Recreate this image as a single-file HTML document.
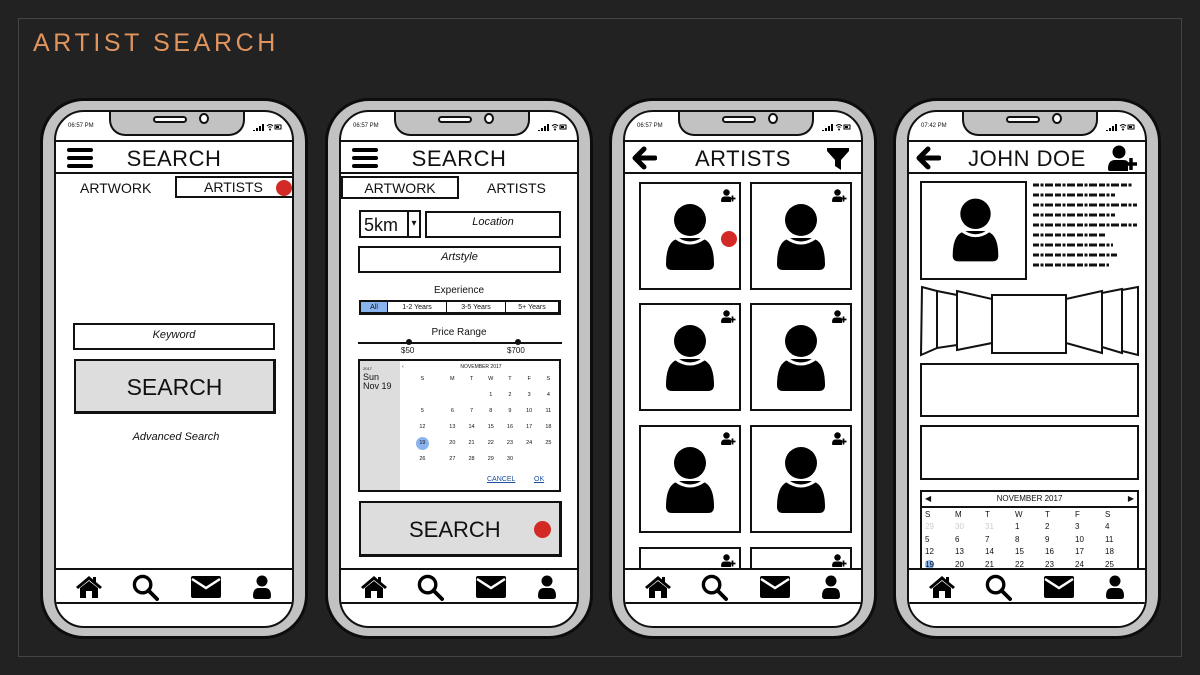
<!DOCTYPE html>
<html><head><meta charset="utf-8">
<style>
*{margin:0;padding:0;box-sizing:border-box}
body{width:1200px;height:675px;background:#222;position:relative;overflow:hidden;font-family:"Liberation Sans",sans-serif;color:#111}
.frame{position:absolute;left:18px;top:18px;width:1164px;height:639px;border:1px solid #444}
.title{position:absolute;left:33px;top:29px;font-size:25px;letter-spacing:3.6px;color:#e0945e}
.ph{position:absolute;top:98px;width:268px;height:541px;background:#c2c2c2;border:3px solid #0d0d0d;border-radius:44px}
.scr{position:absolute;left:11px;top:9px;width:240px;height:518px;background:#fff;border:2px solid #111;border-radius:30px;overflow:hidden}
.notch{position:absolute;left:53px;top:-2px;width:136px;height:26px;background:#c2c2c2;border:2px solid #111;border-top:none;border-radius:0 0 16px 16px}
.spk{position:absolute;left:42px;top:6px;width:34px;height:7px;border:2px solid #111;border-radius:4px;background:#fff}
.cam{position:absolute;left:88px;top:3px;width:10px;height:11px;border:2px solid #111;border-radius:50%;background:#fff}
.time{position:absolute;left:12px;top:11px;font-size:6px}
.sig{position:absolute;left:196px;top:11px;width:30px;height:8px}
.hdr{position:absolute;left:0;top:28px;width:236px;height:34px;border-top:2px solid #111;border-bottom:2px solid #111}
.hdr .t{position:absolute;left:0;right:0;top:4px;text-align:center;font-size:22px;letter-spacing:0.5px}
.nav{position:absolute;left:0;top:456px;width:236px;height:36px;border-top:2px solid #111;border-bottom:2px solid #111}
.a{position:absolute}
.box{position:absolute;border:2px solid #111;background:#fff}
.it{font-style:italic;font-size:11px;text-align:center}
.red{position:absolute;width:16px;height:16px;border-radius:50%;background:#d42a26}
.cal td{font-size:5.5px;text-align:center;height:16px}
.cal4 td{font-size:8px;text-align:left;height:12.5px;padding-left:3px}
</style></head><body>
<svg width="0" height="0" style="position:absolute">
<defs>
<symbol id="person" viewBox="0 0 60 70"><circle cx="30" cy="18" r="16"/><path d="M6 62 Q6 36 22 36 L38 36 Q54 36 54 62 Q54 68 48 68 L12 68 Q6 68 6 62Z"/><path d="M16 36 Q30 46 44 36" stroke="#fff" stroke-width="3" fill="none"/></symbol>
<symbol id="home" viewBox="0 0 28 24"><path d="M14 1 L1 12 L3 14 L14 5 L25 14 L27 12 L21 7 L21 2 L18 2 L18 4.5Z"/><path d="M5 13 L14 6 L23 13 L23 23 L17 23 L17 16 L11 16 L11 23 L5 23Z"/></symbol>
<symbol id="mag" viewBox="0 0 28 28"><circle cx="11" cy="11" r="8.5" fill="none" stroke="#000" stroke-width="3.5"/><path d="M17 17 L26 26" stroke="#000" stroke-width="4" stroke-linecap="round"/></symbol>
<symbol id="mail" viewBox="0 0 30 22"><rect x="0" y="0" width="30" height="22" rx="2"/><path d="M1 3 L15 12 L29 3" stroke="#fff" stroke-width="2.5" fill="none"/></symbol>
<symbol id="usr" viewBox="0 0 20 24"><circle cx="10" cy="6" r="5.5"/><path d="M1 21 Q1 13 7 13 L13 13 Q19 13 19 21 Q19 24 16 24 L4 24 Q1 24 1 21Z"/></symbol>
<symbol id="addu" viewBox="0 0 30 26"><circle cx="11" cy="7" r="6.5"/><path d="M0 24 Q0 15 7 15 L15 15 Q19 15 20 17 L20 26 L2 26 Q0 26 0 24Z"/><path d="M17 19 L29 19 M23 13 L23 25" stroke="#000" stroke-width="3.5"/></symbol>
<symbol id="sig" viewBox="0 0 30 8"><path d="M1 7h2v1H1zM4 5h2v3H4zM7 3h2v5H7zM10 1h2v7h-2z"/><path d="M15 3 Q18 0 21 3 M16.5 4.5 Q18 3 19.5 4.5" stroke="#000" fill="none" stroke-width="1"/><circle cx="18" cy="6.5" r="1"/><rect x="23" y="2" width="6" height="4" fill="none" stroke="#000" stroke-width="1"/><rect x="24" y="3" width="3" height="2"/></symbol>
</defs></svg>

<div class="frame"></div>
<div class="title">ARTIST SEARCH</div>

<!-- Phone 1 -->
<div class="ph" style="left:40px">
 <div class="scr">
  <div class="notch"><div class="spk"></div><div class="cam"></div></div>
  <div class="time">06:57 PM</div><svg class="sig"><use href="#sig" width="30" height="8"/></svg>
  <div class="hdr"><svg class="a" style="left:11px;top:5px" width="26" height="22"><rect y="1" width="26" height="4" rx="2"/><rect y="9" width="26" height="4" rx="2"/><rect y="17" width="26" height="4" rx="2"/></svg><div class="t">SEARCH</div></div>
  <div class="a" style="left:24px;top:68px;font-size:14px">ARTWORK</div>
  <div class="box" style="left:119px;top:64px;width:119px;height:22px;font-size:14px;padding:1px 0 0 27px">ARTISTS</div>
  <div class="red" style="left:220px;top:68px"></div>
  <div class="box it" style="left:17px;top:211px;width:202px;height:27px;padding-top:4px">Keyword</div>
  <div class="box" style="left:18px;top:247px;width:202px;height:55px;background:#ddd;font-size:23px;text-align:center;padding-top:13px;border-width:2px 3px 3px 2px">SEARCH</div>
  <div class="a it" style="left:0;width:240px;top:319px">Advanced Search</div>
  <div class="nav"><svg class="a" style="left:19px;top:5px" width="28" height="24"><use href="#home" width="28" height="24"/></svg><svg class="a" style="left:76px;top:4px" width="27" height="27"><use href="#mag" width="27" height="27"/></svg><svg class="a" style="left:135px;top:6px" width="30" height="22"><use href="#mail" width="30" height="22"/></svg><svg class="a" style="left:196px;top:5px" width="20" height="24"><use href="#usr" width="20" height="24"/></svg></div>
 </div>
</div>

<!-- Phone 2 -->
<div class="ph" style="left:325px">
 <div class="scr">
  <div class="notch"><div class="spk"></div><div class="cam"></div></div>
  <div class="time">06:57 PM</div><svg class="sig"><use href="#sig" width="30" height="8"/></svg>
  <div class="hdr"><svg class="a" style="left:11px;top:5px" width="26" height="22"><rect y="1" width="26" height="4" rx="2"/><rect y="9" width="26" height="4" rx="2"/><rect y="17" width="26" height="4" rx="2"/></svg><div class="t">SEARCH</div></div>
  <div class="box" style="left:0;top:64px;width:118px;height:23px;font-size:14px;text-align:center;padding-top:2px">ARTWORK</div>
  <div class="a" style="left:146px;top:68px;font-size:14px">ARTISTS</div>
  <div class="box" style="left:18px;top:98px;width:50px;height:28px;font-size:18px;padding:3px 0 0 3px">5km</div>
  <div class="box" style="left:66px;top:98px;width:14px;height:28px;font-size:10px;text-align:center;padding-top:6px">▾</div>
  <div class="box it" style="left:84px;top:99px;width:136px;height:27px;padding-top:3px">Location</div>
  <div class="box it" style="left:17px;top:134px;width:203px;height:27px;padding-top:3px">Artstyle</div>
  <div class="a" style="left:0;width:236px;top:173px;text-align:center;font-size:10px">Experience</div>
  <div class="box" style="left:18px;top:188px;width:202px;height:15px;display:flex;font-size:7px;border-width:2px 3px 3px 2px">
   <div style="width:27px;background:#8ab4f0;text-align:center;border-right:1px solid #111;line-height:11px">All</div>
   <div style="width:59px;text-align:center;border-right:1px solid #111;line-height:11px">1-2 Years</div>
   <div style="width:59px;text-align:center;border-right:1px solid #111;line-height:11px">3-5 Years</div>
   <div style="flex:1;text-align:center;line-height:11px">5+ Years</div></div>
  <div class="a" style="left:0;width:236px;top:215px;text-align:center;font-size:10px">Price Range</div>
  <div class="a" style="left:17px;top:230px;width:204px;height:2px;background:#111"></div>
  <div class="a" style="left:65px;top:227px;width:6px;height:6px;background:#111;border-radius:50%"></div>
  <div class="a" style="left:174px;top:227px;width:6px;height:6px;background:#111;border-radius:50%"></div>
  <div class="a" style="left:60px;top:234px;font-size:8px">$50</div>
  <div class="a" style="left:166px;top:234px;font-size:8px">$700</div>
  <div class="box" style="left:17px;top:247px;width:203px;height:133px;overflow:hidden">
   <div class="a" style="left:0;top:0;width:40px;height:131px;background:#ddd;font-size:9px;padding:2px 0 0 3px;line-height:9px"><span style="font-size:4px">2017</span><br>Sun<br>Nov 19</div>
   <div class="a" style="left:42px;top:3px;width:158px;font-size:5px;display:flex;justify-content:space-between"><span>‹</span><span>NOVEMBER 2017</span><span>›</span></div>
   <table class="cal" style="position:absolute;left:42px;top:10px;width:156px;border-collapse:collapse">
    <tr><td>S</td><td>M</td><td>T</td><td>W</td><td>T</td><td>F</td><td>S</td></tr>
    <tr><td></td><td></td><td></td><td>1</td><td>2</td><td>3</td><td>4</td></tr>
    <tr><td>5</td><td>6</td><td>7</td><td>8</td><td>9</td><td>10</td><td>11</td></tr>
    <tr><td>12</td><td>13</td><td>14</td><td>15</td><td>16</td><td>17</td><td>18</td></tr>
    <tr><td><span style="display:inline-block;width:13px;height:13px;border-radius:50%;background:#8ab4f0;line-height:13px">19</span></td><td>20</td><td>21</td><td>22</td><td>23</td><td>24</td><td>25</td></tr>
    <tr><td>26</td><td>27</td><td>28</td><td>29</td><td>30</td><td></td><td></td></tr>
   </table>
   <div class="a" style="left:127px;top:115px;font-size:7px;color:#1d4f9c;text-decoration:underline">CANCEL</div>
   <div class="a" style="left:174px;top:115px;font-size:7px;color:#1d4f9c;text-decoration:underline">OK</div>
  </div>
  <div class="box" style="left:18px;top:389px;width:203px;height:56px;background:#ddd;font-size:22px;padding:14px 0 0 48px;border-width:2px 3px 3px 2px">SEARCH</div>
  <div class="red" style="left:193px;top:409px;width:17px;height:17px"></div>
  <div class="nav"><svg class="a" style="left:19px;top:5px" width="28" height="24"><use href="#home" width="28" height="24"/></svg><svg class="a" style="left:76px;top:4px" width="27" height="27"><use href="#mag" width="27" height="27"/></svg><svg class="a" style="left:135px;top:6px" width="30" height="22"><use href="#mail" width="30" height="22"/></svg><svg class="a" style="left:196px;top:5px" width="20" height="24"><use href="#usr" width="20" height="24"/></svg></div>
 </div>
</div>

<!-- Phone 3 -->
<div class="ph" style="left:609px">
 <div class="scr">
  <div class="notch"><div class="spk"></div><div class="cam"></div></div>
  <div class="time">06:57 PM</div><svg class="sig"><use href="#sig" width="30" height="8"/></svg>
  <div class="hdr"><svg class="a" style="left:6px;top:4px" width="26" height="24"><path d="M24 12 L5 12 M13 3 L4 12 L13 21" stroke="#000" stroke-width="5" fill="none" stroke-linecap="round" stroke-linejoin="round"/></svg><div class="t">ARTISTS</div><svg class="a" style="left:202px;top:6px" width="22" height="22"><path d="M0 0 L22 0 L22 3 L14 12 L14 22 L8 18 L8 12 L0 3Z"/></svg></div>
  <div class="a" style="left:0;top:64px;width:236px;height:392px;overflow:hidden">
   <div class="box" style="left:14px;top:6px;width:102px;height:108px"><svg class="a" style="left:80px;top:5px" width="15" height="13"><use href="#addu" width="15" height="13"/></svg><svg class="a" style="left:19px;top:18px" width="60" height="70"><use href="#person"/></svg></div>
   <div class="red" style="left:96px;top:55px"></div>
   <div class="box" style="left:125px;top:6px;width:102px;height:108px"><svg class="a" style="left:80px;top:5px" width="15" height="13"><use href="#addu" width="15" height="13"/></svg><svg class="a" style="left:19px;top:18px" width="60" height="70"><use href="#person"/></svg></div>
   <div class="box" style="left:14px;top:127px;width:102px;height:108px"><svg class="a" style="left:80px;top:5px" width="15" height="13"><use href="#addu" width="15" height="13"/></svg><svg class="a" style="left:19px;top:18px" width="60" height="70"><use href="#person"/></svg></div>
   <div class="box" style="left:125px;top:127px;width:102px;height:108px"><svg class="a" style="left:80px;top:5px" width="15" height="13"><use href="#addu" width="15" height="13"/></svg><svg class="a" style="left:19px;top:18px" width="60" height="70"><use href="#person"/></svg></div>
   <div class="box" style="left:14px;top:249px;width:102px;height:108px"><svg class="a" style="left:80px;top:5px" width="15" height="13"><use href="#addu" width="15" height="13"/></svg><svg class="a" style="left:19px;top:18px" width="60" height="70"><use href="#person"/></svg></div>
   <div class="box" style="left:125px;top:249px;width:102px;height:108px"><svg class="a" style="left:80px;top:5px" width="15" height="13"><use href="#addu" width="15" height="13"/></svg><svg class="a" style="left:19px;top:18px" width="60" height="70"><use href="#person"/></svg></div>
   <div class="box" style="left:14px;top:371px;width:102px;height:108px"><svg class="a" style="left:80px;top:5px" width="15" height="13"><use href="#addu" width="15" height="13"/></svg></div>
   <div class="box" style="left:125px;top:371px;width:102px;height:108px"><svg class="a" style="left:80px;top:5px" width="15" height="13"><use href="#addu" width="15" height="13"/></svg></div>
  </div>
  <div class="nav"><svg class="a" style="left:19px;top:5px" width="28" height="24"><use href="#home" width="28" height="24"/></svg><svg class="a" style="left:76px;top:4px" width="27" height="27"><use href="#mag" width="27" height="27"/></svg><svg class="a" style="left:135px;top:6px" width="30" height="22"><use href="#mail" width="30" height="22"/></svg><svg class="a" style="left:196px;top:5px" width="20" height="24"><use href="#usr" width="20" height="24"/></svg></div>
 </div>
</div>

<!-- Phone 4 -->
<div class="ph" style="left:893px">
 <div class="scr">
  <div class="notch"><div class="spk"></div><div class="cam"></div></div>
  <div class="time">07:42 PM</div><svg class="sig"><use href="#sig" width="30" height="8"/></svg>
  <div class="hdr"><svg class="a" style="left:6px;top:4px" width="26" height="24"><path d="M24 12 L5 12 M13 3 L4 12 L13 21" stroke="#000" stroke-width="5" fill="none" stroke-linecap="round" stroke-linejoin="round"/></svg><div class="t">JOHN DOE</div><svg class="a" style="left:199px;top:3px" width="30" height="26"><use href="#addu" width="30" height="26"/></svg></div>
  <div class="box" style="left:11px;top:69px;width:107px;height:99px"><svg class="a" style="left:25px;top:13px" width="57" height="68"><use href="#person"/></svg></div>
  <svg class="a" style="left:124px;top:70px" width="110" height="96">
   <g stroke="#111" stroke-width="3" stroke-dasharray="6 1.5 3 1.5 8 2">
    <path d="M0 3 H100"/><path d="M0 13 H82"/><path d="M0 23 H104"/><path d="M0 33 H82"/><path d="M0 43 H104"/><path d="M0 53 H72"/><path d="M0 63 H80"/><path d="M0 73 H84"/><path d="M0 83 H76"/>
   </g></svg>
  <svg class="a" style="left:11px;top:173px" width="222" height="72" fill="#fff" stroke="#111" stroke-width="2">
   <path d="M2 2 L17 6 L17 63 L1 70Z"/><path d="M17 6 L37 10 L37 60 L17 63Z"/><path d="M37 6 L72 14 L72 58 L37 65Z"/>
   <path d="M72 10 L146 10 L146 68 L72 68Z"/>
   <path d="M146 14 L182 6 L182 68 L146 58Z"/><path d="M182 8 L202 4 L202 68 L182 62Z"/><path d="M202 5 L218 2 L218 70 L202 66Z"/>
  </svg>
  <div class="box" style="left:11px;top:251px;width:219px;height:54px"></div>
  <div class="box" style="left:11px;top:313px;width:219px;height:55px"></div>
  <div class="box" style="left:11px;top:378px;width:219px;height:90px">
   <div style="height:16px;border-bottom:2px solid #111;font-size:8px;display:flex;justify-content:space-between;padding:2px 3px 0"><span>◀</span><span>NOVEMBER 2017</span><span>▶</span></div>
   <table class="cal4" style="width:210px;border-collapse:collapse">
    <tr><td>S</td><td>M</td><td>T</td><td>W</td><td>T</td><td>F</td><td>S</td></tr>
    <tr style="color:#ccc"><td>29</td><td>30</td><td>31</td><td style="color:#111">1</td><td style="color:#111">2</td><td style="color:#111">3</td><td style="color:#111">4</td></tr>
    <tr><td>5</td><td>6</td><td>7</td><td>8</td><td>9</td><td>10</td><td>11</td></tr>
    <tr><td>12</td><td>13</td><td>14</td><td>15</td><td>16</td><td>17</td><td>18</td></tr>
    <tr><td><span style="background:#8ab4f0;border-radius:50%">19</span></td><td>20</td><td>21</td><td>22</td><td>23</td><td>24</td><td>25</td></tr>
   </table>
  </div>
  <div class="a" style="left:0;top:456px;width:236px;height:60px;background:#fff"></div>
  <div class="nav"><svg class="a" style="left:19px;top:5px" width="28" height="24"><use href="#home" width="28" height="24"/></svg><svg class="a" style="left:76px;top:4px" width="27" height="27"><use href="#mag" width="27" height="27"/></svg><svg class="a" style="left:135px;top:6px" width="30" height="22"><use href="#mail" width="30" height="22"/></svg><svg class="a" style="left:196px;top:5px" width="20" height="24"><use href="#usr" width="20" height="24"/></svg></div>
 </div>
</div>
</body></html>
